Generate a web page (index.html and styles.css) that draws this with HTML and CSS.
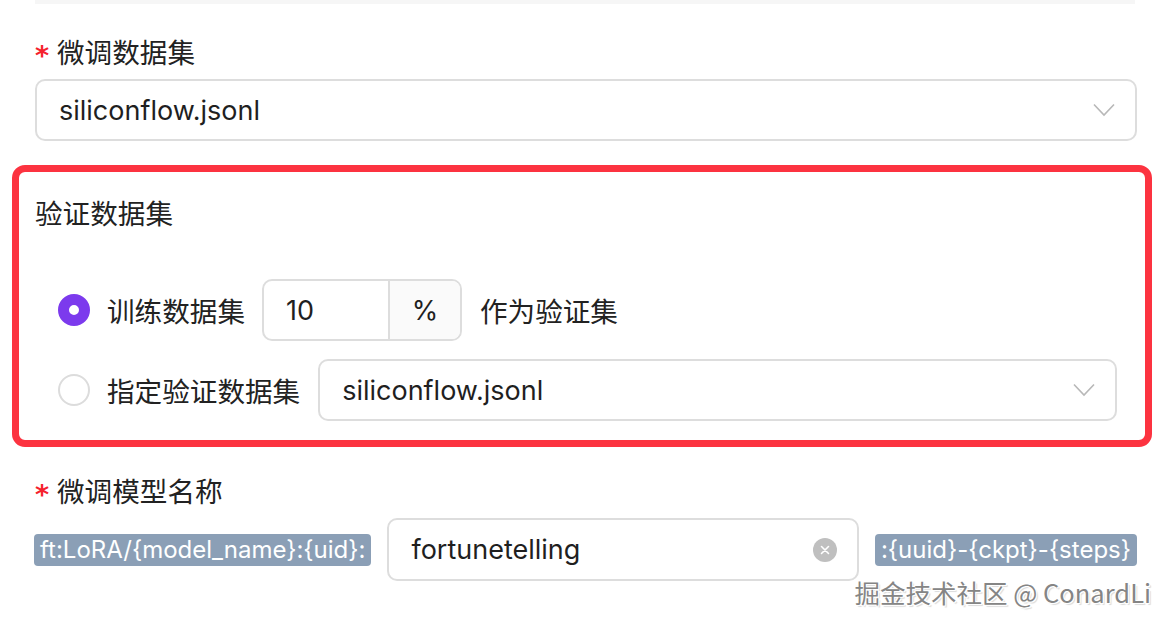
FILE: index.html
```html
<!DOCTYPE html>
<html lang="zh-CN">
<head>
<meta charset="utf-8">
<link rel="stylesheet" href="styles.css">
</head>
<body>
<div class="page">
  <div class="top-strip"></div>

  <div class="label"><span class="req">*</span>微调数据集</div>
  <div class="select">
    <span class="select-text">siliconflow.jsonl</span>
    <svg class="chev" width="22" height="14" viewBox="0 0 22 14"><path d="M1 1.5 L11 12 L21 1.5" fill="none" stroke="#b8b8b8" stroke-width="1.6"/></svg>
  </div>

  <div class="val-box">
    <div class="val-title">验证数据集</div>
    <div class="val-rows">
      <div class="row">
        <span class="radio checked"></span>
        <span class="opt">训练数据集</span>
        <div class="group">
          <span class="group-input">10</span>
          <span class="group-addon">%</span>
        </div>
        <span class="opt">作为验证集</span>
      </div>
      <div class="row">
        <span class="radio"></span>
        <span class="opt">指定验证数据集</span>
        <div class="select inner">
          <span class="select-text">siliconflow.jsonl</span>
          <svg class="chev" width="22" height="14" viewBox="0 0 22 14"><path d="M1 1.5 L11 12 L21 1.5" fill="none" stroke="#b8b8b8" stroke-width="1.6"/></svg>
        </div>
      </div>
    </div>
  </div>

  <div class="label label2"><span class="req">*</span>微调模型名称</div>
  <div class="name-row">
    <span class="tag">ft:LoRA/{model_name}:{uid}:</span>
    <div class="name-input">
      <span class="select-text">fortunetelling</span>
      <svg class="clear" width="24" height="24" viewBox="0 0 24 24"><circle cx="12" cy="12" r="12" fill="#bfbfbf"/><path d="M8.5 8.5 L15.5 15.5 M15.5 8.5 L8.5 15.5" stroke="#fff" stroke-width="1.6" stroke-linecap="round"/></svg>
    </div>
    <span class="tag">:{uuid}-{ckpt}-{steps}</span>
  </div>

  <div class="watermark">掘金技术社区 @ ConardLi</div>
</div>
</body>
</html>
```
FILE: styles.css
```css
html, body {
  margin: 0;
  padding: 0;
  background: #ffffff;
}
body {
  font-family: "Inter", "Noto Sans CJK SC", sans-serif;
  color: #1f1f1f;
  width: 1170px;
  height: 622px;
  overflow: hidden;
}
.page {
  position: relative;
  height: 622px;
  padding: 0 33px 0 35px;
  box-sizing: border-box;
}
.top-strip {
  height: 4px;
  background: #f6f6f6;
  margin-right: 2px;
}
.label {
  margin-top: 31px;
  height: 36px;
  line-height: 36px;
  font-size: 27.6px;
  color: #222;
  display: flex;
  align-items: center;
}
.req {
  color: #f5222d;
  font-size: 27px;
  font-weight: 600;
  width: 22px;
  font-family: "DejaVu Sans", sans-serif;
  position: relative;
  top: 3px;
}
.select {
  margin-top: 8px;
  height: 62px;
  box-sizing: border-box;
  border: 2px solid #dddddd;
  border-radius: 10px;
  display: flex;
  align-items: center;
  justify-content: space-between;
  padding: 0 20px 0 22px;
  background: #fff;
}
.select-text {
  font-size: 27px;
  color: #1f1f1f;
}
.val-box {
  margin: 24px -15px 0 -23px;
  border: 7px solid #fc3340;
  border-radius: 13px;
  padding: 24px 28px 19px 16px;
}
.val-title {
  height: 36px;
  line-height: 36px;
  font-size: 27.6px;
  color: #222;
}
.val-rows {
  margin-top: 47px;
  padding-left: 23px;
  display: flex;
  flex-direction: column;
  gap: 18px;
}
.row {
  display: flex;
  align-items: center;
  height: 62px;
}
.radio {
  width: 32px;
  height: 32px;
  box-sizing: border-box;
  border-radius: 50%;
  border: 2px solid #dcdcdc;
  background: #fff;
  flex: none;
  margin-right: 17px;
}
.radio.checked {
  border: 11px solid #7c3aed;
  background: #fff;
}
.opt {
  font-size: 27.6px;
  color: #222;
}
.group {
  margin: 0 18px 0 17px;
  display: flex;
  height: 62px;
  box-sizing: border-box;
  border: 2px solid #dddddd;
  border-radius: 10px;
  overflow: hidden;
}
.group-input {
  width: 126px;
  padding-left: 22px;
  box-sizing: border-box;
  font-size: 27px;
  display: flex;
  align-items: center;
  border-right: 2px solid #dddddd;
}
.group-addon {
  width: 70px;
  background: #fafafa;
  font-size: 27px;
  display: flex;
  align-items: center;
  justify-content: center;
}
.select.inner {
  margin-top: 0;
  margin-left: 18px;
  flex: 1;
}
.label2 {
  margin-top: 27px;
}
.name-row {
  margin-top: 8px;
  display: flex;
  align-items: center;
  height: 63px;
}
.tag {
  background: #8b9fb6;
  color: #fff;
  font-size: 24px;
  height: 32px;
  line-height: 32px;
  padding: 0 6px;
  border-radius: 4px;
  white-space: nowrap;
  margin-left: -1px;
}
.name-input {
  margin: 0 17px 0 16px;
  flex: 1;
  height: 63px;
  box-sizing: border-box;
  border: 2px solid #dddddd;
  border-radius: 10px;
  display: flex;
  align-items: center;
  justify-content: space-between;
  padding: 0 20px 0 22px;
}
.watermark {
  position: absolute;
  right: 19px;
  top: 573px;
  font-size: 25.5px;
  color: #858585;
  font-family: "Noto Sans CJK SC", "DejaVu Sans", sans-serif;
  text-shadow: 1px 1px 0 #fff, -1px -1px 0 #fff, 1px -1px 0 #fff, -1px 1px 0 #fff, 2px 2px 1px rgba(0,0,0,0.15);
}
```
